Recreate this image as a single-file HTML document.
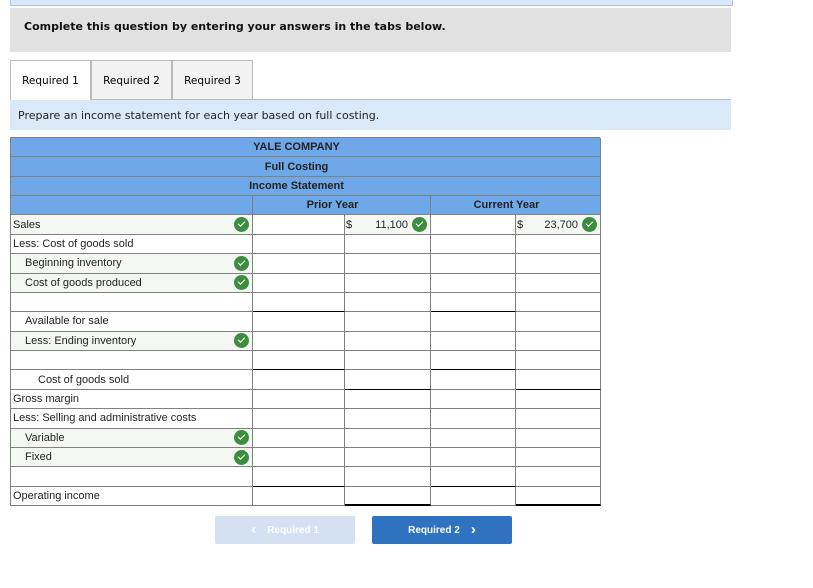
<!DOCTYPE html><html><head><style>
body{margin:0;width:813px;height:588px;background:#fff;font-family:"Liberation Sans",sans-serif;position:relative;overflow:hidden}
.abs{position:absolute}
.v{font-family:"DejaVu Sans","Liberation Sans",sans-serif}
.grid{position:absolute;left:10px;top:137px;width:590px;height:369px;display:grid;grid-template-columns:242px 92px 86px 85px 85px;grid-template-rows:repeat(19,1fr);border-left:1px solid #808080;border-top:1px solid #808080;box-sizing:border-box;font-size:11px;color:#222}
.grid>div{border-right:1px solid #808080;border-bottom:1px solid #808080;position:relative;display:flex;align-items:center;box-sizing:border-box;overflow:hidden}
.h{background:#6fa8e8;justify-content:center;font-weight:bold;color:#222;padding-right:18px}
.s{grid-column:1/6}
.g{background:#f3f8f3}
.l{padding-left:2px}.i1{padding-left:14px}.i2{padding-left:27px}
.k{position:absolute;right:3px;top:50%;margin-top:-7.5px;width:15px;height:15px;border-radius:50%;background:#3d8c40}
.k:after{content:"";position:absolute;left:4px;top:4px;width:6px;height:3px;border-left:1.5px solid #fff;border-bottom:1.5px solid #fff;transform:rotate(-45deg)}
.bb{border-bottom:1px solid #000!important}
.bt{border-bottom:2px solid #000!important}
</style></head><body>
<div class="abs" style="left:10px;top:0;width:721px;height:5px;background:#d9e9f7;border:1px solid #a9c4e3;border-top:none"></div>
<div class="abs v" style="left:10px;top:8px;width:721px;height:44px;background:#e1e1e1;font-size:11px;font-weight:bold;line-height:37px;padding-left:14px;box-sizing:border-box;color:#111">Complete this question by entering your answers in the tabs below.</div>
<div class="abs" style="left:10px;top:99px;width:721px;height:1px;background:#bbb"></div>
<div class="abs v" style="left:10px;top:60px;width:79px;height:40px;background:#fff;border:1px solid #bbb;border-bottom:none;font-size:10.5px;text-align:center;line-height:40px">Required 1</div>
<div class="abs v" style="left:91px;top:60px;width:79px;height:38px;background:#f2f2f2;border:1px solid #bbb;font-size:10.5px;text-align:center;line-height:40px">Required 2</div>
<div class="abs v" style="left:172px;top:60px;width:79px;height:38px;background:#f2f2f2;border:1px solid #bbb;font-size:10.5px;text-align:center;line-height:40px">Required 3</div>
<div class="abs v" style="left:10px;top:100px;width:721px;height:30px;background:#d9e9f7;font-size:11px;line-height:31px;padding-left:8px;box-sizing:border-box;color:#222">Prepare an income statement for each year based on full costing.</div>
<div class="grid">
<div class="h s">YALE COMPANY</div>
<div class="h s">Full Costing</div>
<div class="h s">Income Statement</div>
<div class="h"></div><div class="h" style="grid-column:2/4">Prior Year</div><div class="h" style="grid-column:4/6">Current Year</div>
<div class="g l">Sales<span class="k"></span></div><div></div><div class="g" style="padding-left:1px">$<span style="position:absolute;right:22px">11,100</span><span class="k"></span></div><div></div><div class="g" style="padding-left:1px">$<span style="position:absolute;right:22px">23,700</span><span class="k"></span></div>
<div class="l">Less: Cost of goods sold</div><div></div><div></div><div></div><div></div>
<div class="g i1">Beginning inventory<span class="k"></span></div><div></div><div></div><div></div><div></div>
<div class="g i1">Cost of goods produced<span class="k"></span></div><div></div><div></div><div></div><div></div>
<div></div><div class="bb"></div><div></div><div class="bb"></div><div></div>
<div class="i1">Available for sale</div><div></div><div></div><div></div><div></div>
<div class="g i1">Less: Ending inventory<span class="k"></span></div><div></div><div></div><div></div><div></div>
<div></div><div class="bb"></div><div></div><div class="bb"></div><div></div>
<div class="i2">Cost of goods sold</div><div></div><div class="bb"></div><div></div><div class="bb"></div>
<div class="l">Gross margin</div><div></div><div></div><div></div><div></div>
<div class="l">Less: Selling and administrative costs</div><div></div><div></div><div></div><div></div>
<div class="g i1">Variable<span class="k"></span></div><div></div><div></div><div></div><div></div>
<div class="g i1">Fixed<span class="k"></span></div><div></div><div></div><div></div><div></div>
<div></div><div class="bb"></div><div></div><div class="bb"></div><div></div>
<div class="l">Operating income</div><div></div><div class="bt"></div><div></div><div class="bt"></div>
</div>
<div class="abs" style="left:215px;top:516px;width:140px;height:28px;background:#d4e1f3;border-radius:2px;color:#fff;font-size:10px;font-weight:bold;text-align:center;line-height:28px"><span style="font-size:15px;vertical-align:-1px">&lsaquo;</span>&nbsp;&nbsp;&nbsp; Required 1</div>
<div class="abs" style="left:372px;top:516px;width:140px;height:28px;background:#2f73c0;border-radius:2px;color:#fff;font-size:10px;font-weight:bold;text-align:center;line-height:28px">Required 2 &nbsp;&nbsp;&nbsp;<span style="font-size:15px;vertical-align:-1px">&rsaquo;</span></div>
</body></html>
